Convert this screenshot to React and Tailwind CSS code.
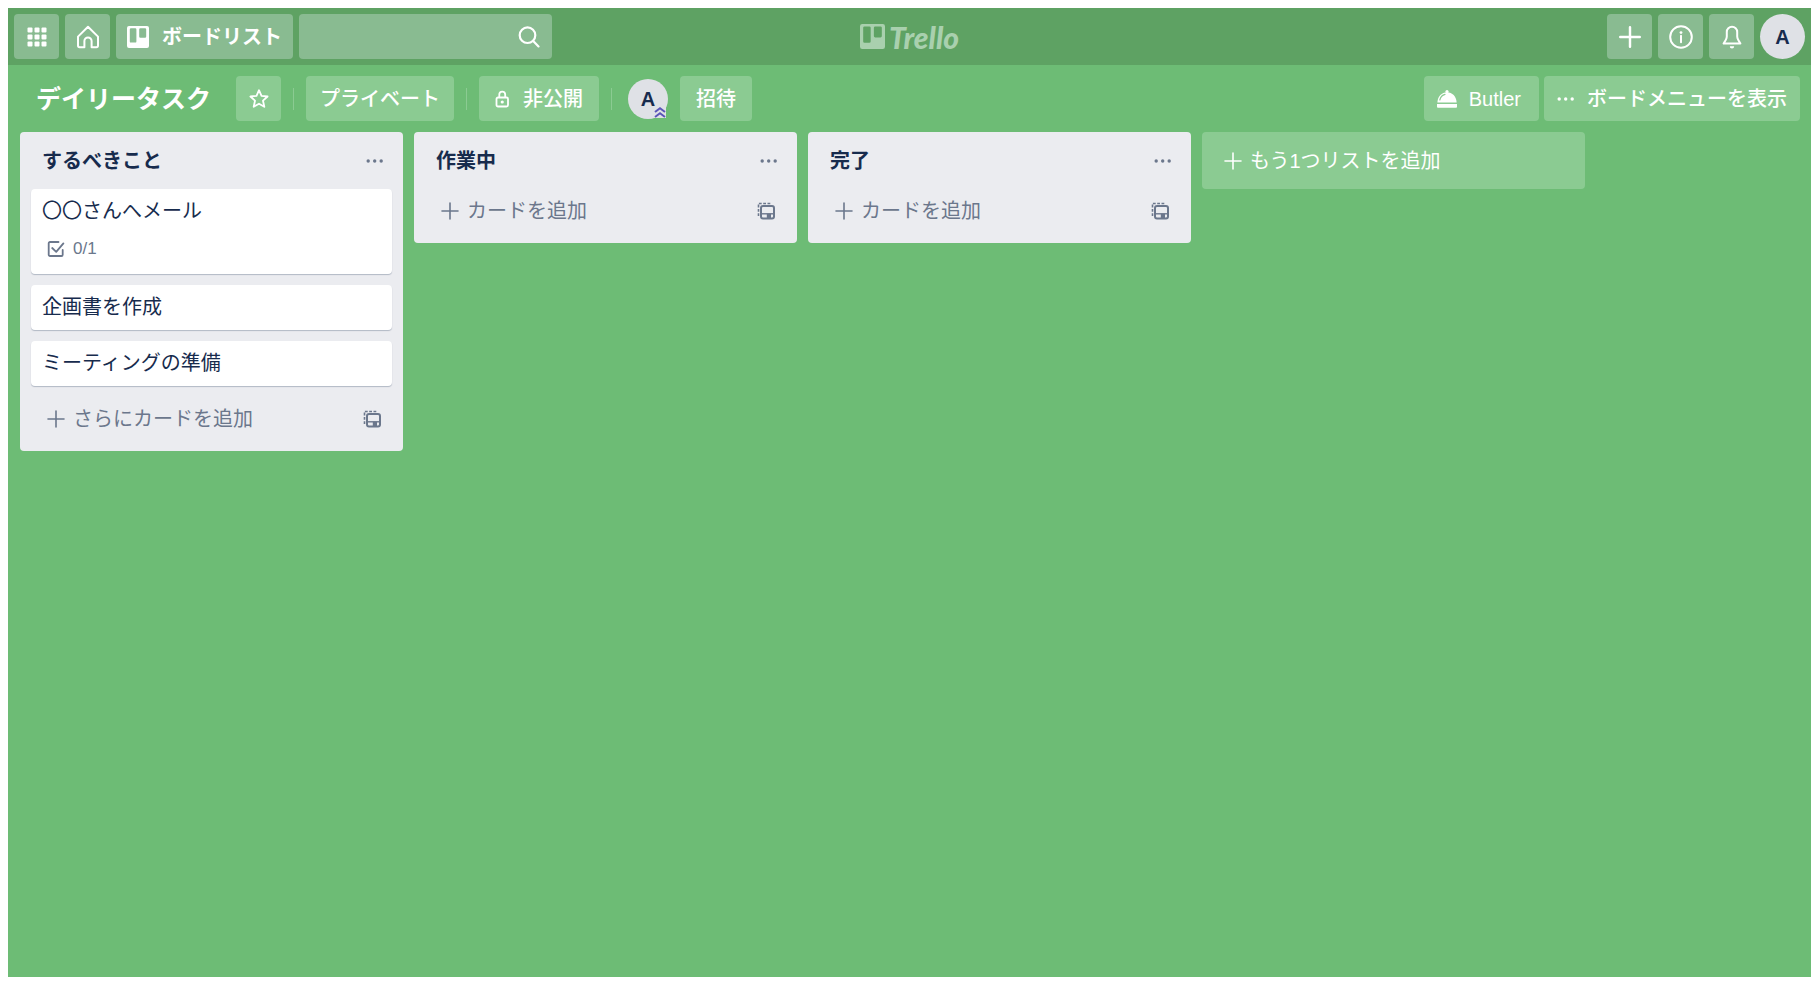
const lists = [
    {
        title: 'するべきこと',
        addLabel: 'さらにカードを追加',
        cards: [
            { title: '〇〇さんへメール', checklist: '0/1' },
            { title: '企画書を作成' },
            { title: 'ミーティングの準備' },
        ],
    },
    { title: '作業中', addLabel: 'カードを追加', cards: [] },
    { title: '完了', addLabel: 'カードを追加', cards: [] },
]

function App() {
    return (
        <div className="min-h-screen flex bg-white pl-2 pt-2 pr-[7px] pb-[7px] font-['Liberation_Sans','Noto_Sans_CJK_JP',sans-serif] text-[20px] leading-6 text-[#172b4d]">
            <div className="flex-1 min-w-0 flex flex-col bg-[#6dbc75]">
                <Header />
                <BoardBar />
                <main className="flex-1 flex items-start gap-[11px] pl-3 pr-[11px] overflow-x-auto">
                    {lists.map((list) => (
                        <List key={list.title} {...list} />
                    ))}
                    <button className="w-[383px] h-[57px] shrink-0 flex items-center gap-2 pl-[22px] rounded bg-[#8bcb92] text-white">
                        <PlusIcon className="w-[18px] h-[18px]" />
                        もう1つリストを追加
                    </button>
                </main>
            </div>
        </div>
    )
}

function Header() {
    return (
        <header className="grid grid-cols-[1fr_auto_1fr] items-center h-[57px] px-[6px] bg-[#5ea263] text-white">
            <div className="flex gap-[6px]">
                <HeaderButton label="アプリ">
                    <svg className="w-5 h-5" viewBox="0 0 20 20" fill="currentColor">
                        {[0, 7, 14].map((y) =>
                            [0, 7, 14].map((x) => (
                                <rect key={`${x}-${y}`} x={x + 0.5} y={y + 0.5} width="5" height="5" rx="1" />
                            ))
                        )}
                    </svg>
                </HeaderButton>
                <HeaderButton label="ホーム">
                    <svg className="w-6 h-6" viewBox="0 0 24 24" fill="none" stroke="currentColor" strokeWidth="2" strokeLinejoin="round" strokeLinecap="round">
                        <path d="M12 1.8L2 11.6v9a1.6 1.6 0 001.600 1.600h4.800V16a3.600 3.600 0 017.200 0v6.200h4.800a1.600 1.600 0 001.600-1.600v-9z" />
                    </svg>
                </HeaderButton>
                <button className="h-[45px] flex items-center gap-[13px] px-[11px] rounded bg-[#89bb91] font-bold whitespace-nowrap">
                    <BoardIcon className="w-[22px] h-[22px]" />
                    ボードリスト
                </button>
                <div className="relative w-[253px]">
                    <input
                        type="search"
                        aria-label="検索"
                        className="w-full h-[45px] pl-3 pr-11 rounded bg-[#89bb91] outline-none"
                    />
                    <svg className="absolute right-3 top-3 w-[22px] h-[22px]" viewBox="0 0 22 22" fill="none" stroke="currentColor" strokeWidth="2.2" strokeLinecap="round">
                        <circle cx="9.5" cy="9.2" r="7.8" />
                        <path d="M15.2 15l5.3 5.4" />
                    </svg>
                </div>
            </div>

            <a href="#" className="flex items-center gap-1 text-[#a9d0ae]">
                <BoardIcon className="w-[25px] h-[25px]" />
                <span className="font-['Lato',sans-serif] font-black italic text-[30px] leading-8">Trello</span>
            </a>

            <div className="flex justify-end gap-[6px]">
                <HeaderButton label="作成">
                    <PlusIcon className="w-[22px] h-[22px]" strokeWidth="2" />
                </HeaderButton>
                <HeaderButton label="情報">
                    <svg className="w-6 h-6" viewBox="0 0 24 24" fill="none" stroke="currentColor" strokeWidth="2">
                        <circle cx="12" cy="12" r="10.8" />
                        <path d="M12 10.8v6.4" strokeLinecap="round" />
                        <circle cx="12" cy="7.6" r="1.4" fill="currentColor" stroke="none" />
                    </svg>
                </HeaderButton>
                <HeaderButton label="通知">
                    <svg className="w-6 h-6" viewBox="0 0 24 24" fill="none" stroke="currentColor" strokeWidth="2" strokeLinejoin="round">
                        <path d="M12 1.800a5.200 5.200 0 00-5.200 5.200v4.600c0 1.200-.4 2.300-1.200 3.600L3.600 18.600h16.800l-2-3.400c-.8-1.300-1.200-2.400-1.200-3.600V7A5.200 5.200 0 0012 1.800z" />
                        <path d="M9.800 21.200a2.200 2.200 0 004.400 0z" fill="currentColor" stroke="none" />
                    </svg>
                </HeaderButton>
                <button className="w-[45px] h-[45px] rounded-full bg-[#dfe1e6] text-[#172b4d] font-bold">A</button>
            </div>
        </header>
    )
}

function BoardBar() {
    return (
        <div className="flex items-center justify-between h-[67px] pl-7 pr-[11px] text-white font-medium whitespace-nowrap">
            <div className="flex items-center gap-3">
                <h1 className="text-[25px] leading-8 font-bold mr-[13px]">デイリータスク</h1>
                <button aria-label="スター" className="w-[45px] h-[45px] flex items-center justify-center rounded bg-[#8bcb92]">
                    <svg className="w-5 h-5" viewBox="0 0 20 20" fill="none" stroke="currentColor" strokeWidth="1.8" strokeLinejoin="round">
                        <path d="M10 1.200l2.500 5.700 6.100.6-4.600 4.200 1.300 6.100-5.300-3.100-5.300 3.100L6 11.700 1.400 7.500l6.100-.6z" />
                    </svg>
                </button>
                <Divider />
                <button className="h-[45px] px-[14px] rounded bg-[#8bcb92]">プライベート</button>
                <Divider />
                <button className="h-[45px] flex items-center gap-3 px-4 rounded bg-[#8bcb92]">
                    <svg className="w-4 h-[18px]" viewBox="0 0 16 18" fill="none" stroke="currentColor" strokeWidth="1.8">
                        <rect x="1.500" y="7.500" width="11.500" height="9" rx="1.500" />
                        <path d="M4.300 7.500V4.600a2.950 2.950 0 015.900 0v2.900" />
                        <circle cx="7.250" cy="12" r="1.600" fill="currentColor" stroke="none" />
                    </svg>
                    非公開
                </button>
                <Divider />
                <div className="relative ml-1">
                    <button className="w-10 h-10 block rounded-full bg-[#dfe1e6] text-[#172b4d] font-bold">A</button>
                    <span className="absolute right-[2px] bottom-[1px] w-3 h-3 bg-[#dfe1e6]">
                        <svg className="w-3 h-3" viewBox="0 0 12 12" fill="none" stroke="#5a55b8" strokeWidth="2">
                            <path d="M1 6l5-3.800L11 6M1 11l5-3.800L11 11" />
                        </svg>
                    </span>
                </div>
                <button className="h-[45px] px-4 rounded bg-[#8bcb92]">招待</button>
            </div>

            <div className="flex gap-[5px]">
                <button className="h-[45px] flex items-center gap-[11px] pl-3 pr-[18px] rounded bg-[#8bcb92]">
                    <svg className="w-[22px] h-[22px]" viewBox="0 0 22 22" fill="currentColor">
                        <circle cx="11" cy="3.600" r="1.600" />
                        <path d="M11 4.200c-5.300 0-9.300 4.200-9.600 10.300h19.200C20.300 8.400 16.300 4.200 11 4.200z" />
                        <path d="M1 16h20v2.800a1 1 0 01-1 1H2a1 1 0 01-1-1z" />
                        <path d="M3.800 12c.7-2.800 2.500-4.900 5.200-5.600" fill="none" stroke="#8bcb92" strokeWidth="1.200" strokeLinecap="round" />
                    </svg>
                    Butler
                </button>
                <button className="h-[45px] flex items-center gap-[11px] pl-3 pr-[13px] rounded bg-[#8bcb92]">
                    <DotsIcon />
                    ボードメニューを表示
                </button>
            </div>
        </div>
    )
}

function List({ title, cards, addLabel }) {
    return (
        <section className="w-[383px] shrink-0 rounded bg-[#ebecf0] px-[11px]">
            <div className="flex items-center justify-between h-[57px] pl-[11px] pr-[7px]">
                <h2 className="font-bold">{title}</h2>
                <button aria-label="リスト操作" className="text-[#6b778c]">
                    <DotsIcon />
                </button>
            </div>

            {cards.map((card) => (
                <Card key={card.title} {...card} />
            ))}

            <div className="flex items-start justify-between h-[54px] pl-4 pr-[11px] pt-[10px] text-[#6b778c]">
                <button className="flex items-center gap-2">
                    <PlusIcon className="w-[18px] h-[18px]" />
                    {addLabel}
                </button>
                <button aria-label="テンプレートから作成" className="h-6 flex items-center">
                    <TemplateIcon />
                </button>
            </div>
        </section>
    )
}

function Card({ title, checklist }) {
    return (
        <article className="mb-[11px] px-[11px] pt-[10px] pb-[11px] rounded bg-white shadow-[0_1px_1px_#091e4240]">
            <h3>{title}</h3>
            {checklist && (
                <div className="flex items-center gap-2 mt-[14px] mb-[2px] pl-[5px] text-[17px] text-[#6b778c]">
                    <svg className="w-[18px] h-[18px]" viewBox="0 0 18 18" fill="none" stroke="currentColor" strokeWidth="1.800" strokeLinecap="round" strokeLinejoin="round">
                        <path d="M11.500 2H3a1.300 1.300 0 00-1.300 1.300v11.400A1.300 1.300 0 003 16h11.400a1.300 1.300 0 001.300-1.300V10" />
                        <path d="M5.200 8l4 3.800 7.200-8.400" />
                    </svg>
                    {checklist}
                </div>
            )}
        </article>
    )
}

function HeaderButton({ label, children }) {
    return (
        <button aria-label={label} className="w-[45px] h-[45px] flex items-center justify-center rounded bg-[#89bb91]">
            {children}
        </button>
    )
}

function Divider() {
    return <div className="w-px h-[22px] bg-[#8bcb92]" />
}

function BoardIcon({ className }) {
    return (
        <svg className={className} viewBox="0 0 22 22" fill="currentColor" fillRule="evenodd">
            <path d="M2 0h18a2 2 0 012 2v18a2 2 0 01-2 2H2a2 2 0 01-2-2V2a2 2 0 012-2zM4 2.200A1.200 1.200 0 002.800 3.400v12A1.200 1.200 0 004 16.600h4.200a1.200 1.200 0 001.200-1.200v-12a1.200 1.200 0 00-1.200-1.200zM13.400 2.200a1.200 1.200 0 00-1.200 1.200v7.200a1.200 1.200 0 001.200 1.200h4.600a1.200 1.200 0 001.200-1.200V3.400A1.200 1.200 0 0018 2.200z" />
        </svg>
    )
}

function PlusIcon({ className, strokeWidth = '1.6' }) {
    return (
        <svg className={className} viewBox="0 0 18 18" fill="none" stroke="currentColor" strokeWidth={strokeWidth} strokeLinecap="round">
            <path d="M9 1v16M1 9h16" />
        </svg>
    )
}

function DotsIcon() {
    return (
        <svg className="w-5 h-5" viewBox="0 0 20 20" fill="currentColor">
            <circle cx="3.200" cy="10" r="1.700" />
            <circle cx="9.700" cy="10" r="1.700" />
            <circle cx="16.200" cy="10" r="1.700" />
        </svg>
    )
}

function TemplateIcon() {
    return (
        <svg className="w-[18px] h-[18px]" viewBox="0 0 18 18" fill="none" stroke="currentColor">
            <path d="M1.500 14V1.500h12.500" strokeWidth="1.600" strokeDasharray="2.800 1.500" />
            <rect x="4" y="4" width="13" height="12.500" rx="2" strokeWidth="2" />
            <path d="M4 11.800h13" strokeWidth="1.400" />
            <path d="M9.800 11.800h4.200v4.200H9.800z" fill="currentColor" stroke="none" />
        </svg>
    )
}

export default App
